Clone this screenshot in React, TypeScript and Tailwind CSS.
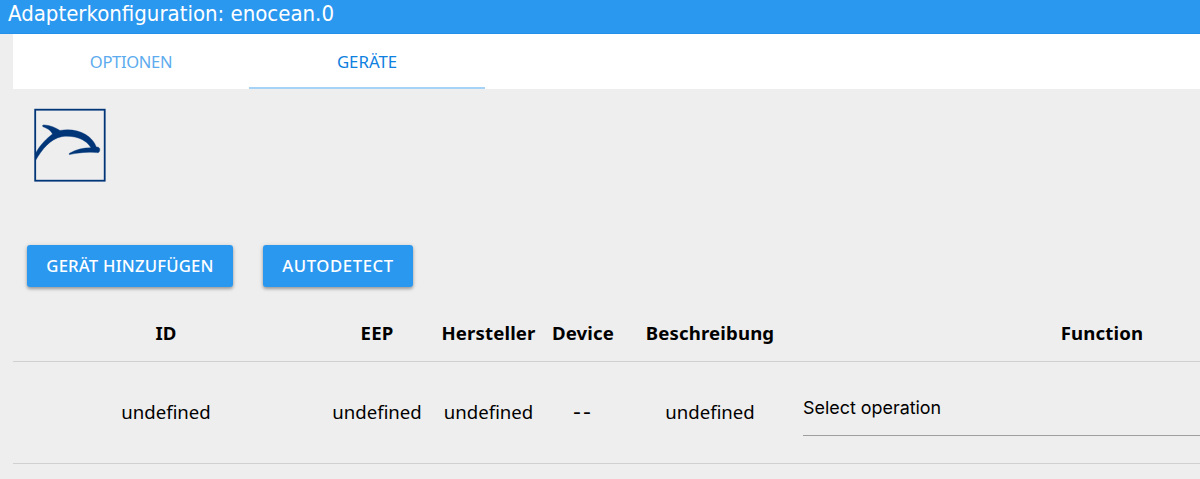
import { clsx } from 'clsx'

const TABS = [
  { label: 'Optionen', active: false },
  { label: 'Geräte', active: true },
]

const COLUMNS = ['ID', 'EEP', 'Hersteller', 'Device', 'Beschreibung', 'Function']

const DEVICES = [
  { id: 'undefined', eep: 'undefined', manufacturer: 'undefined', device: '--', desc: 'undefined' },
]

function Logo() {
  return (
    <svg width="72" height="74" viewBox="0 0 72 74" fill="none" aria-label="EnOcean">
      <rect x="1.2" y="1.7" width="69.5" height="71" stroke="#003578" strokeWidth="1.8" />
      <path
        d="M1.500 45.500 C6 37 12 31 18.500 26 C17 22.500 13 20 9 18.800 C8 17.500 8.700 16.800 10 16.900 C16 17.300 21.500 19.500 26 22.500 C43 19.500 58 27 62.300 39 C64.500 38.800 65.800 39.700 65.800 41.500 C65.700 43.800 65 45 62.500 44.600 C53 43.700 44 44.700 35.500 46.600 C34.700 46.300 35 45.500 36 45 C42 41.300 50 39.700 57 39.800 C52 31 40 26.800 27.500 28.700 C16 31 8 41.500 1.500 52.500 Z"
        fill="#003578"
        stroke="#003578"
        strokeWidth="0.4"
      />
    </svg>
  )
}

function RaisedButton({ children, className }: { children: string; className: string }) {
  return (
    <button
      type="button"
      className={clsx(
        'flex h-[42px] items-center justify-center rounded-[3px] bg-[#2b98f0] pb-px text-[16.7px] font-medium whitespace-nowrap text-white uppercase shadow-[0_2px_3px_rgba(0,0,0,0.26),0_1px_5px_rgba(0,0,0,0.16)]',
        className
      )}
    >
      {children}
    </button>
  )
}

export default function App() {
  return (
    <div className="h-[479px] w-[1200px] overflow-hidden bg-[#eeeeee] font-['Noto_Sans',sans-serif] text-black">
      <header className="h-[34px] border-b border-[#2390ea] bg-[#2b98f0] pl-2">
        <h1 className="font-['DejaVu_Sans_Condensed','DejaVu_Sans',sans-serif] text-[22px] leading-[27px] whitespace-nowrap text-white [font-stretch:condensed]">
          Adapterkonfiguration: enocean.0
        </h1>
      </header>

      <div className="ml-[13px]">
        {/* Tabs */}
        <nav className="flex h-[55px] bg-white">
          {TABS.map(tab => (
            <a
              key={tab.label}
              className={clsx(
                'flex w-[236px] items-center justify-center border-b-2 pt-[3px] uppercase',
                tab.active
                  ? 'border-[#a5d3f8] text-[16.8px] text-[#0d80e0]'
                  : 'border-transparent text-[16.5px] tracking-[-0.3px] text-[#5cabee]'
              )}
            >
              {tab.label}
            </a>
          ))}
        </nav>

        <div className="h-[156px] pt-[19px] pl-[21px]">
          <Logo />
        </div>

        <div className="flex gap-[30px] pl-[14px]">
          <RaisedButton className="w-[206px] tracking-[0.2px]">Gerät hinzufügen</RaisedButton>
          <RaisedButton className="w-[150px] tracking-[0.6px]">Autodetect</RaisedButton>
        </div>

        {/* Device list */}
        <div className="mt-[19px] w-[1395px] text-[18.6px]">
          <div className="grid h-[56px] grid-cols-[306px_116px_107px_82px_172px_612px] items-center border-b border-[#d0d0d0] pb-[2px] text-center font-bold tracking-[0.15px]">
            {COLUMNS.map(col => (
              <span key={col}>{col}</span>
            ))}
          </div>
          {DEVICES.map((d, i) => (
            <div
              key={i}
              className="grid h-[102px] grid-cols-[306px_116px_107px_82px_172px_612px] items-center border-b border-[#d0d0d0] pb-[2px] text-center"
            >
              <span>{d.id}</span>
              <span>{d.eep}</span>
              <span>{d.manufacturer}</span>
              <span className="font-['DejaVu_Sans',sans-serif] text-[22px] leading-6 tracking-[2px]">{d.device}</span>
              <span>{d.desc}</span>
              <div className="mx-[7px] mb-[6px] flex h-[54px] items-center border-b border-[#9e9e9e] text-left font-['Inter',sans-serif] text-[17.9px]">
                Select operation
              </div>
            </div>
          ))}
        </div>
      </div>
    </div>
  )
}
